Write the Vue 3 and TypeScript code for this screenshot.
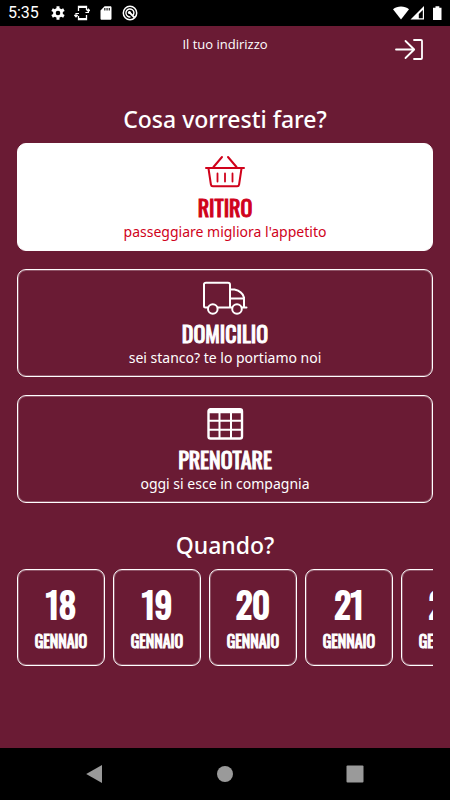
<script setup lang="ts">
import { ref } from 'vue'

type ServiceId = 'ritiro' | 'domicilio' | 'prenotare'

interface Service {
  id: ServiceId
  title: string
  note: string
}

interface Day {
  day: number
  month: string
}

const services: Service[] = [
  { id: 'ritiro', title: 'RITIRO', note: "passeggiare migliora l'appetito" },
  { id: 'domicilio', title: 'DOMICILIO', note: 'sei stanco? te lo portiamo noi' },
  { id: 'prenotare', title: 'PRENOTARE', note: 'oggi si esce in compagnia' },
]

const days: Day[] = [18, 19, 20, 21, 22].map((day) => ({ day, month: 'GENNAIO' }))

const selected = ref<ServiceId>('ritiro')
const selectedDay = ref<number | null>(null)
</script>

<template>
  <div class="screen">
    <div class="status">
      <span class="clock">5:35</span>
      <svg class="status-icon" viewBox="0 0 16 16">
        <g fill="none" stroke="#fff">
          <circle cx="8" cy="8" r="3.6" stroke-width="2.6" />
          <path
            d="M8 1.2v2.6M8 12.2v2.6M2.1 4.6l2.3 1.3M11.6 10.1l2.3 1.3M2.1 11.4l2.3-1.3M11.6 5.9l2.3-1.3"
            stroke-width="3"
          />
        </g>
      </svg>
      <svg class="status-icon" viewBox="0 0 16 16">
        <path d="M4.5 6V1.5h8V5M4.5 11v3.5h8V10" fill="none" stroke="#fff" stroke-width="1.3" />
        <path d="M4 1h9v2H4zM4 13h9v2H4z" fill="#fff" />
        <path
          d="M2 11.5V8.5h3M.4 10L2 11.8 3.700 10M14.400 4.500v3h-3M12.800 6l1.600-1.800L16 6"
          fill="none"
          stroke="#fff"
          stroke-width="1.2"
        />
      </svg>
      <svg class="status-icon" viewBox="0 0 16 16">
        <path
          fill="#fff"
          fill-rule="evenodd"
          d="M6.6 1.3h5.6c.8 0 1.3.5 1.3 1.3v10.8c0 .8-.5 1.3-1.3 1.3H3.8c-.8 0-1.3-.5-1.3-1.3v-8zM6.3 3v2.5h1.1V3zM8.5 3v2.5h1.1V3zM10.7 3v2.5h1.1V3z"
        />
      </svg>
      <svg class="status-icon" viewBox="0 0 16 16">
        <g fill="none" stroke="#fff">
          <circle cx="8" cy="8" r="6.7" stroke-width="1.5" />
          <path d="M8.5 11.9A4 4 0 1 1 11.9 7.4c0 1.3-.3 2-.8 2.6" stroke-width="1.4" />
          <path d="M7 7l5.5 5.5" stroke-width="1.8" />
        </g>
        <circle cx="7.4" cy="7.4" r="1.5" fill="#fff" />
      </svg>
      <svg class="signals" viewBox="0 0 50 16">
        <path d="M1 4.3c4.3-3.7 11.7-3.7 16 0L9 14.4z" fill="#fff" />
        <path d="M32 1v13.5H18.5z" fill="#fff" />
        <path d="M30.8 5v8.3h-4V9z" fill="#000" />
        <path d="M43.5 1.3h3.8v1.5h2.2V15h-8.5V2.8h2.5z" fill="#fff" />
      </svg>
    </div>

    <header class="top">
      <button class="address" type="button">Il tuo indirizzo</button>
      <button class="login" type="button" aria-label="Accedi">
        <svg viewBox="0 0 30 24">
          <path
            d="M1 12.5h18M10.5 4l8.7 8.5-8.7 8.5M19 3h7a1 1 0 0 1 1 1v17a1 1 0 0 1-1 1H19"
            fill="none"
            stroke="#fff"
            stroke-width="1.8"
            stroke-linecap="round"
            stroke-linejoin="round"
          />
        </svg>
      </button>
    </header>

    <main class="content">
      <h1 class="heading">Cosa vorresti fare?</h1>
      <div class="services">
        <button
          v-for="service in services"
          :key="service.id"
          type="button"
          class="service"
          :class="{ active: selected === service.id }"
          :aria-pressed="selected === service.id"
          @click="selected = service.id"
        >
          <svg
            class="service-icon"
            viewBox="0 0 48 36"
            fill="none"
            stroke="currentColor"
            stroke-width="2"
            stroke-linecap="round"
            stroke-linejoin="round"
          >
            <template v-if="service.id === 'ritiro'">
              <path d="M5 15h38M7.5 15.5l2.4 16c.2 1.2.8 1.8 1.9 1.8h24.4c1.1 0 1.7-.6 1.9-1.8L40.500 15.500M12.500 14L21 4M35.500 14L27 4" />
              <path d="M16.500 20.500v8M24 20.500v8M31.500 20.500v8" stroke-width="1.8" />
            </template>
            <template v-else-if="service.id === 'domicilio'">
              <path d="M6.500 28.500H4.500c-1 0-1.500-.5-1.500-1.500V5.500C3 4.500 3.600 3.800 5 3.800h22c1.400 0 2 .7 2 1.900v22.800M17 28.500h14M29.500 10.500h4c4.500 1 8.500 4 9.500 8v10M29.500 19.500H43M41 28.500h4.500" />
              <circle cx="11.8" cy="30" r="4.8" />
              <circle cx="36" cy="30" r="4.8" />
            </template>
            <template v-else>
              <rect x="7.500" y="4.200" width="33.500" height="29.300" rx="2" stroke-width="2.4" />
              <path d="M8 5.500h32.500M8 7.200h32.500M8 15.700h33M8 24.700h33M18.500 8v25M30 8v25" />
            </template>
          </svg>
          <span class="service-title">{{ service.title }}</span>
          <span class="service-note">{{ service.note }}</span>
        </button>
      </div>

      <h2 class="heading">Quando?</h2>
      <div class="days">
        <button
          v-for="item in days"
          :key="item.day"
          type="button"
          class="day"
          :aria-pressed="selectedDay === item.day"
          @click="selectedDay = item.day"
        >
          <span class="day-number">{{ item.day }}</span>
          <span class="day-month">{{ item.month }}</span>
        </button>
      </div>
    </main>

    <nav class="system-nav">
      <button type="button" aria-label="Indietro">
        <svg viewBox="0 0 18 18"><path d="M16 0v18L.2 9z" /></svg>
      </button>
      <button type="button" aria-label="Home">
        <svg viewBox="0 0 18 18"><circle cx="9" cy="9" r="8" /></svg>
      </button>
      <button type="button" aria-label="Recenti">
        <svg viewBox="0 0 18 18"><rect x=".5" y=".5" width="17" height="17" rx="1" /></svg>
      </button>
    </nav>
  </div>
</template>

<style>
body {
  margin: 0;
  background: #6a1b34;
}
</style>

<style scoped>
.screen {
  min-height: 100vh;
  display: flex;
  flex-direction: column;
  background: #6a1b34;
  color: #fff;
  font-family: 'Noto Sans', 'Open Sans', sans-serif;
}

button {
  margin: 0;
  padding: 0;
  border: 0;
  background: none;
  color: inherit;
  font-family: inherit;
  cursor: pointer;
}

svg {
  display: block;
}

.status {
  height: 26px;
  display: flex;
  align-items: center;
  gap: 8px;
  padding: 0 8px;
  background: #000;
}

.clock {
  margin-right: 3px;
  font: 16px/26px Roboto, sans-serif;
}

.status-icon {
  width: 16px;
  height: 16px;
}

.signals {
  width: 50px;
  height: 16px;
  margin-left: auto;
}

.top {
  display: grid;
  grid-template-columns: 1fr auto 1fr;
  align-items: start;
  padding: 8px 25px 0;
}

.address {
  grid-column: 2;
  font-family: 'Open Sans', 'Noto Sans', sans-serif;
  font-size: 13px;
  line-height: 20px;
}

.login {
  justify-self: end;
  padding-top: 3px;
}

.login svg {
  width: 30px;
  height: 24px;
}

.content {
  flex: 1;
  padding: 42px 17px 24px;
}

.heading {
  margin: 0;
  font-size: 23px;
  font-weight: 500;
  line-height: 32px;
  text-align: center;
}

.services {
  display: flex;
  flex-direction: column;
  gap: 18px;
  margin: 8px 0 26px;
}

.service {
  display: flex;
  flex-direction: column;
  align-items: center;
  padding: 9px 8px;
  border: 1px solid #fff;
  border-radius: 9px;
  box-shadow: inset 0 0 0 1px rgb(255 255 255 / 25%);
}

.service.active {
  background: #fff;
  color: #d0021b;
}

.service-icon {
  width: 48px;
  height: 36px;
}

.service-title {
  padding-top: 2px;
  font-family: Oswald, 'Liberation Sans Narrow', 'Open Sans', sans-serif;
  font-size: 22px;
  font-weight: 400;
  line-height: 32px;
  -webkit-text-stroke: 1px currentColor;
}

.service-note {
  font-size: 14px;
  line-height: 18px;
}

.days {
  display: flex;
  gap: 8px;
  margin-top: 8px;
  overflow: hidden;
}

.day {
  flex: 0 0 88px;
  box-sizing: border-box;
  display: flex;
  flex-direction: column;
  align-items: center;
  padding: 8px 0 12px;
  border: 1px solid #fff;
  border-radius: 9px;
  box-shadow: inset 0 0 0 1px rgb(255 255 255 / 25%);
  font-family: Oswald, 'Liberation Sans Narrow', 'Open Sans', sans-serif;
  font-weight: 400;
  -webkit-text-stroke: 1px currentColor;
}

.day-number {
  font-size: 34px;
  line-height: 51px;
  -webkit-text-stroke-width: 2px;
}

.day-month {
  font-size: 16px;
  line-height: 24px;
}

.system-nav {
  height: 52px;
  display: flex;
  align-items: center;
  justify-content: center;
  gap: 112px;
  background: #000;
}

.system-nav svg {
  width: 18px;
  height: 18px;
  fill: #9a9a9a;
}
</style>
